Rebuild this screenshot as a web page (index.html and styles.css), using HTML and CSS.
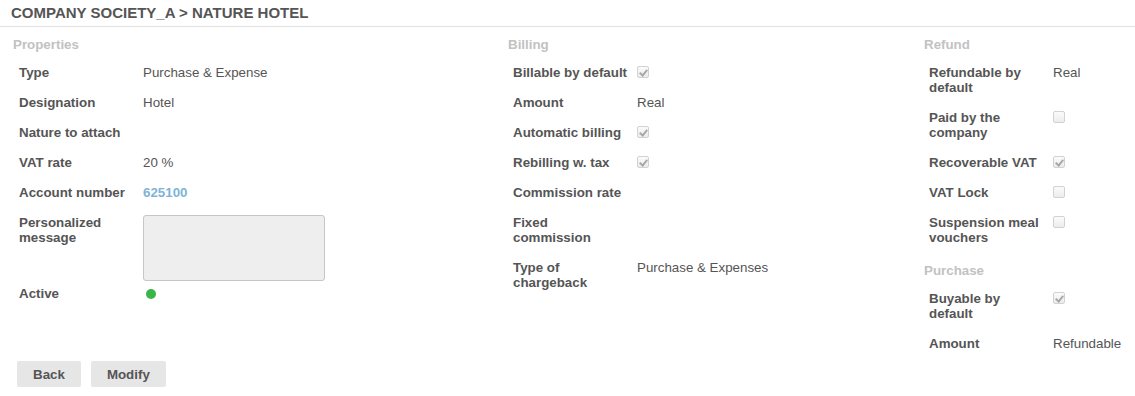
FILE: index.html
```html
<!DOCTYPE html>
<html>
<head>
<meta charset="utf-8">
<link rel="stylesheet" href="styles.css">
</head>
<body>
<h1 class="title">COMPANY SOCIETY_A &gt; NATURE HOTEL</h1>
<div class="sheet">
  <section class="col col-props">
    <h2 class="sec-head">Properties</h2>
    <div class="row"><div class="lbl">Type</div><div class="val">Purchase &amp; Expense</div></div>
    <div class="row"><div class="lbl">Designation</div><div class="val">Hotel</div></div>
    <div class="row"><div class="lbl">Nature to attach</div><div class="val"></div></div>
    <div class="row"><div class="lbl">VAT rate</div><div class="val">20 %</div></div>
    <div class="row"><div class="lbl">Account number</div><div class="val link">625100</div></div>
    <div class="row"><div class="lbl">Personalized message</div><div class="val"><textarea class="msg" disabled></textarea></div></div>
    <div class="row"><div class="lbl">Active</div><div class="val"><span class="dot"></span></div></div>
  </section>
  <section class="col col-billing">
    <h2 class="sec-head">Billing</h2>
    <div class="row"><div class="lbl">Billable by default</div><div class="val"><span class="cb on"></span></div></div>
    <div class="row"><div class="lbl">Amount</div><div class="val">Real</div></div>
    <div class="row"><div class="lbl">Automatic billing</div><div class="val"><span class="cb on"></span></div></div>
    <div class="row"><div class="lbl">Rebilling w. tax</div><div class="val"><span class="cb on"></span></div></div>
    <div class="row"><div class="lbl">Commission rate</div><div class="val"></div></div>
    <div class="row"><div class="lbl">Fixed commission</div><div class="val"></div></div>
    <div class="row"><div class="lbl">Type of chargeback</div><div class="val">Purchase &amp; Expenses</div></div>
  </section>
  <section class="col col-refund">
    <h2 class="sec-head">Refund</h2>
    <div class="row"><div class="lbl">Refundable by default</div><div class="val">Real</div></div>
    <div class="row"><div class="lbl">Paid by the company</div><div class="val"><span class="cb"></span></div></div>
    <div class="row"><div class="lbl">Recoverable VAT</div><div class="val"><span class="cb on"></span></div></div>
    <div class="row"><div class="lbl">VAT Lock</div><div class="val"><span class="cb"></span></div></div>
    <div class="row"><div class="lbl">Suspension meal vouchers</div><div class="val"><span class="cb"></span></div></div>
    <h2 class="sec-head">Purchase</h2>
    <div class="row"><div class="lbl">Buyable by default</div><div class="val"><span class="cb on"></span></div></div>
    <div class="row"><div class="lbl">Amount</div><div class="val">Refundable</div></div>
  </section>
</div>
<div class="actions">
  <button class="btn">Back</button>
  <button class="btn">Modify</button>
</div>
</body>
</html>
```
FILE: styles.css
```css
* { box-sizing: border-box; }
body {
  margin: 0;
  font-family: "Liberation Sans", Arial, sans-serif;
  font-size: 13.33px;
  color: #555;
  background: #fff;
}
.title {
  margin: 0;
  padding: 5px 11px;
  font-size: 15px;
  line-height: 16px;
  font-weight: bold;
  color: #555;
  border-bottom: 1px solid #e2e2e2;
}
.sheet {
  display: grid;
  grid-template-columns: 495px 416px 1fr;
  padding-left: 13px;
}
.sec-head {
  margin: 10px 0 6px;
  font-size: 13.33px;
  line-height: 15px;
  font-weight: bold;
  color: #c2c2c2;
}
.row {
  display: grid;
  grid-template-columns: 124px 1fr;
  padding: 7px 0 8px 6px;
  line-height: 15px;
}
.col-billing .row, .col-refund .row { padding-left: 5px; }
.lbl {
  font-weight: bold;
  padding-right: 9px;
}
.val { min-height: 15px; }
.link { color: #7fb3d6; font-weight: bold; }
.msg {
  display: block;
  width: 182px;
  height: 66px;
  margin: 0 0 -10px;
  background: #eeeeee;
  border: 1px solid #c9c5c0;
  border-radius: 3px;
  resize: none;
  padding: 0;
}
.dot {
  display: block;
  width: 10px;
  height: 10px;
  margin: 3px 0 0 3px;
  border-radius: 50%;
  background: #3ab54a;
}
.cb {
  display: block;
  width: 12px;
  height: 12px;
  margin-top: 1px;
  border: 1px solid #d2d2d2;
  border-radius: 2px;
  background: linear-gradient(#fbfbfb, #ececec);
  position: relative;
}
.cb.on::after {
  content: "";
  position: absolute;
  left: 3px;
  top: 1px;
  width: 3px;
  height: 6px;
  border: solid #a9a9a9;
  border-width: 0 2px 2px 0;
  transform: rotate(40deg);
}
.actions {
  display: flex;
  gap: 10px;
  padding: 2px 0 0 17px;
}
.btn {
  height: 26px;
  padding: 0 16px;
  border: none;
  border-radius: 2px;
  background: #e6e6e6;
  font-family: "Liberation Sans", Arial, sans-serif;
  font-size: 13.33px;
  font-weight: bold;
  color: #555;
}
```
